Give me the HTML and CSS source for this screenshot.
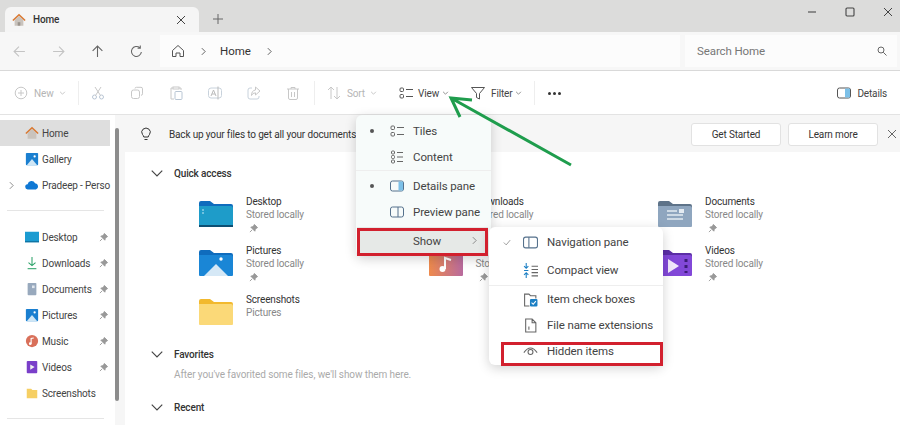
FILE: index.html
```html
<!DOCTYPE html>
<html>
<head>
    <meta charset="UTF-8">
    <title>Home - File Explorer</title>
    <link rel="stylesheet" href="styles.css">
</head>
<body>
<div class="window">
    <div class="tabbar">
        <div class="tab">
            <svg class="ic" viewBox="0 0 16 16"><path d="M3 8v6.500h10V8L8 3.500z" fill="#c9c3bd"/><path d="M6.500 14.500v-4h3v4z" fill="#9b948d"/><path d="M1 8.500 8 2l7 6.500" fill="none" stroke="#d9772f" stroke-width="1.700"/></svg>
            <span class="tab-title">Home</span>
            <svg class="ic-s tab-close" viewBox="0 0 10 10"><path d="M1 1l8 8M9 1l-8 8" stroke="#444" fill="none"/></svg>
        </div>
        <svg class="ic-s tab-plus" viewBox="0 0 10 10"><path d="M5 0v10M0 5h10" stroke="#666" fill="none"/></svg>
        <div class="win-buttons">
            <svg class="ic-s" viewBox="0 0 10 10"><path d="M1 5h8" stroke="#555" stroke-width="1.200"/></svg>
            <svg class="ic-s" viewBox="0 0 10 10"><rect x="1" y="1" width="8" height="8" rx="1" stroke="#444" stroke-width="1.100" fill="none"/></svg>
            <svg class="ic-s" viewBox="0 0 10 10"><path d="M1 1l8 8M9 1l-8 8" stroke="#444" fill="none"/></svg>
        </div>
    </div>

    <div class="addressbar">
        <div class="nav-buttons">
            <svg class="ic-nav" viewBox="0 0 12 12"><path d="M11 6H1M5.500 1.500 1 6l4.500 4.500" stroke="#c4c4c4" fill="none"/></svg>
            <svg class="ic-nav" viewBox="0 0 12 12"><path d="M1 6h10M6.500 1.500 11 6l-4.500 4.500" stroke="#c4c4c4" fill="none"/></svg>
            <svg class="ic-nav" viewBox="0 0 12 12"><path d="M6 11V1M1.500 5.500 6 1l4.500 4.500" stroke="#666" fill="none"/></svg>
            <svg class="ic-nav" viewBox="0 0 12 12"><path d="M10.500 6.500A4.600 4.600 0 1 1 9 2.500M9.500 .5v2.500H7" stroke="#666" fill="none"/></svg>
        </div>
        <div class="path-box">
            <svg class="ic-home" viewBox="0 0 14 14"><path d="M1.500 6.500 7 1.500l5.500 5v6H9V9H5v3.500H1.500z" stroke="#555" fill="none"/></svg>
            <svg class="chev-r" viewBox="0 0 6 10"><path d="M1 1l4 4-4 4" stroke="#444" fill="none"/></svg>
            <span class="path-text">Home</span>
            <svg class="chev-r" viewBox="0 0 6 10"><path d="M1 1l4 4-4 4" stroke="#444" fill="none"/></svg>
        </div>
        <div class="search-box">
            <span>Search Home</span>
            <svg class="ic-s" viewBox="0 0 10 10"><circle cx="4" cy="4" r="3" stroke="#666" fill="none"/><path d="M6.300 6.300 9.500 9.500" stroke="#666"/></svg>
        </div>
    </div>

    <div class="toolbar">
        <div class="tool tool-new">
            <svg class="ic" viewBox="0 0 14 14"><circle cx="7" cy="7" r="5.800" stroke="#c8c8c8" fill="none"/><path d="M7 4v6M4 7h6" stroke="#c8c8c8"/></svg>
            <span class="off">New</span>
            <svg class="chev-d" viewBox="0 0 8 5"><path d="M1 1l3 3 3-3" stroke="#bbb" fill="none"/></svg>
        </div>
        <div class="tool-sep"></div>
        <div class="tool-icons">
            <svg class="ic" viewBox="0 0 14 14"><circle cx="3.500" cy="11" r="2" stroke="#b9c6d4" fill="none"/><circle cx="10.500" cy="11" r="2" stroke="#b9c6d4" fill="none"/><path d="M4.500 9.500 10 1M9.500 9.500 4 1" stroke="#c8c8c8" fill="none"/></svg>
            <svg class="ic" viewBox="0 0 14 14"><rect x="1.500" y="4" width="8" height="8.500" rx="2" stroke="#c8c8c8" fill="#fff"/><path d="M5 2.500q0-1.200 1.500-1.200H11q1.500 0 1.500 1.500v5q0 1.500-1.500 1.500" stroke="#c8c8c8" fill="none"/></svg>
            <svg class="ic" viewBox="0 0 14 14"><path d="M4 2H2v11h3M10 2h2v2" stroke="#c8c8c8" fill="none"/><rect x="4" y="1" width="6" height="2" stroke="#c8c8c8" fill="none"/><rect x="6" y="5.500" width="7" height="8" rx="1" stroke="#b9c6d4" fill="none"/></svg>
            <svg class="ic" viewBox="0 0 14 14"><rect x=".5" y="2" width="13" height="10" rx="2.500" stroke="#c8d2dc" fill="none"/><path d="M3 10l2.500-6L8 10M4 8h3M10 .5v13" stroke="#bbb" fill="none"/></svg>
            <svg class="ic" viewBox="0 0 14 14"><path d="M5 2H3q-2 0-2 2v7q0 2 2 2h7q2 0 2-2v-1" stroke="#c8d2dc" fill="none"/><path d="M8.500 1 13 5 8.500 9V6.800Q5.500 6.800 4.500 9.500q0-5 4-5.500z" stroke="#c8c8c8" fill="none"/></svg>
            <svg class="ic" viewBox="0 0 14 14"><path d="M1 3h12M5 3V1.500h4V3M2.500 3v9q0 1.500 1.500 1.500h6q1.500 0 1.500-1.500V3M5.500 6v5M8.500 6v5" stroke="#c8c8c8" fill="none"/></svg>
        </div>
        <div class="tool-sep"></div>
        <div class="tool tool-sort">
            <svg class="ic" viewBox="0 0 14 14"><path d="M4 13V1M1 4l3-3 3 3M10 1v12M7 10l3 3 3-3" stroke="#c8c8c8" fill="none"/></svg>
            <span class="off">Sort</span>
            <svg class="chev-d" viewBox="0 0 8 5"><path d="M1 1l3 3 3-3" stroke="#bbb" fill="none"/></svg>
        </div>
        <div class="tool tool-view">
            <svg class="ic" viewBox="0 0 14 14"><rect x="1" y="2" width="3.500" height="3.500" rx="1" stroke="#555" fill="none"/><rect x="1" y="8.500" width="3.500" height="3.500" rx="1" stroke="#555" fill="none"/><path d="M7 3.500h7M7 10.500h7" stroke="#555"/></svg>
            <span>View</span>
            <svg class="chev-d" viewBox="0 0 8 5"><path d="M1 1l3 3 3-3" stroke="#777" fill="none"/></svg>
        </div>
        <div class="tool tool-filter">
            <svg class="ic" viewBox="0 0 14 14"><path d="M.5 1.500h13L8.500 7.500v5.500l-3-1.500v-4z" stroke="#555" fill="none"/></svg>
            <span>Filter</span>
            <svg class="chev-d" viewBox="0 0 8 5"><path d="M1 1l3 3 3-3" stroke="#777" fill="none"/></svg>
        </div>
        <div class="tool-sep"></div>
        <div class="more"><i></i><i></i><i></i></div>
        <div class="tool tool-details">
            <svg class="ic" viewBox="0 0 14 14"><rect x=".5" y="2" width="13" height="10" rx="2" stroke="#555" fill="none"/><rect x="8" y="2.500" width="5" height="9" fill="#7cc0e8"/></svg>
            <span>Details</span>
        </div>
    </div>

    <div class="main">
        <div class="sidebar">
            <div class="side-row current">
                <svg class="ic" viewBox="0 0 16 16"><path d="M3 8v6.500h10V8L8 3.500z" fill="#c9c3bd"/><path d="M1 8.500 8 2l7 6.500" fill="none" stroke="#d9772f" stroke-width="1.700"/></svg>
                <span>Home</span>
            </div>
            <div class="side-row">
                <svg class="ic" viewBox="0 0 16 16"><rect x="1" y="1" width="14" height="14" rx="1" fill="#1a7fd0"/><path d="M2 15l6-7 6 7z" fill="#cfe6f5"/><circle cx="11" cy="5" r="1.300" fill="#fff"/></svg>
                <span>Gallery</span>
            </div>
            <div class="side-row">
                <svg class="side-arrow" viewBox="0 0 6 10"><path d="M1 1l4 4-4 4" stroke="#777" fill="none"/></svg>
                <svg class="ic" viewBox="0 0 16 16"><path d="M3.500 13a3 3 0 0 1-.5-6 4.500 4.500 0 0 1 8.500-1 3.600 3.600 0 0 1 1 7z" fill="#0f78d4"/></svg>
                <span>Pradeep - Perso</span>
            </div>
            <div class="side-line"></div>
            <div class="side-row">
                <svg class="ic" viewBox="0 0 16 16"><rect x="0" y="2" width="16" height="12" fill="#1b9bd1"/><rect x="0" y="13" width="16" height="1" fill="#0b5f8a"/></svg>
                <span>Desktop</span>
                <svg class="pin" viewBox="0 0 10 10"><path d="M6 .5 9.500 4 8.500 4.500 7 6 6.500 8 2 3.500 4 3 5.500 1.500zM3.500 6.500 1 9" stroke="#999" fill="#999"/></svg>
            </div>
            <div class="side-row">
                <svg class="ic" viewBox="0 0 16 16"><path d="M8 1v10M4 7.500 8 11l4-3.500" stroke="#2ea36a" stroke-width="1.200" fill="none"/><path d="M3 14.500h10" stroke="#2ea36a" stroke-width="1.200"/></svg>
                <span>Downloads</span>
                <svg class="pin" viewBox="0 0 10 10"><path d="M6 .5 9.500 4 8.500 4.500 7 6 6.500 8 2 3.500 4 3 5.500 1.500zM3.500 6.500 1 9" stroke="#999" fill="#999"/></svg>
            </div>
            <div class="side-row">
                <svg class="ic" viewBox="0 0 16 16"><rect x="3" y="1" width="10" height="14" rx="1" fill="#98a9bd"/><rect x="8" y="4" width="3" height="3" fill="#dfe6ee"/></svg>
                <span>Documents</span>
                <svg class="pin" viewBox="0 0 10 10"><path d="M6 .5 9.500 4 8.500 4.500 7 6 6.500 8 2 3.500 4 3 5.500 1.500zM3.500 6.500 1 9" stroke="#999" fill="#999"/></svg>
            </div>
            <div class="side-row">
                <svg class="ic" viewBox="0 0 16 16"><rect x="1" y="1" width="14" height="14" rx="1" fill="#1a7fd0"/><path d="M2 15l6-7 6 7z" fill="#cfe6f5"/><circle cx="11" cy="5" r="1.300" fill="#fff"/></svg>
                <span>Pictures</span>
                <svg class="pin" viewBox="0 0 10 10"><path d="M6 .5 9.500 4 8.500 4.500 7 6 6.500 8 2 3.500 4 3 5.500 1.500zM3.500 6.500 1 9" stroke="#999" fill="#999"/></svg>
            </div>
            <div class="side-row">
                <svg class="ic" viewBox="0 0 16 16"><circle cx="8" cy="8" r="7" fill="#d9705a"/><path d="M7 11V5l3-.5" stroke="#fff" stroke-width="1.300" fill="none"/><circle cx="6" cy="11" r="1.500" fill="#fff"/></svg>
                <span>Music</span>
                <svg class="pin" viewBox="0 0 10 10"><path d="M6 .5 9.500 4 8.500 4.500 7 6 6.500 8 2 3.500 4 3 5.500 1.500zM3.500 6.500 1 9" stroke="#999" fill="#999"/></svg>
            </div>
            <div class="side-row">
                <svg class="ic" viewBox="0 0 16 16"><rect x="2" y="1" width="12" height="14" rx="1" fill="#7a3fc9"/><path d="M6 5l5 3-5 3z" fill="#eee"/></svg>
                <span>Videos</span>
                <svg class="pin" viewBox="0 0 10 10"><path d="M6 .5 9.500 4 8.500 4.500 7 6 6.500 8 2 3.500 4 3 5.500 1.500zM3.500 6.500 1 9" stroke="#999" fill="#999"/></svg>
            </div>
            <div class="side-row">
                <svg class="ic" viewBox="0 0 16 16"><path d="M2 3h5l1.500 1.500H14V14H2z" fill="#f6cf63"/></svg>
                <span>Screenshots</span>
            </div>
            <div class="side-line"></div>
        </div>
        <div class="scroll-track"><div class="scroll-thumb"></div></div>

        <div class="content">
            <div class="banner">
                <svg class="ic" viewBox="0 0 14 14"><path d="M4.800 10Q4.500 8.500 3.500 7.500 1.500 4.500 4 2.200 7-.2 10 2.200q2.500 2.300.5 5.300-1 1-1.300 2.500zM5.500 12.500h3" stroke="#333" fill="none"/></svg>
                <span class="banner-text">Back up your files to get all your documents</span>
                <button class="btn">Get Started</button>
                <button class="btn">Learn more</button>
                <svg class="ic-s banner-x" viewBox="0 0 10 10"><path d="M1 1l8 8M9 1l-8 8" stroke="#666" fill="none"/></svg>
            </div>

            <div class="section-head quick-head">
                <svg class="chev-big" viewBox="0 0 10 6"><path d="M.5.5 5 5 9.500.5" stroke="#444" fill="none"/></svg>
                <span>Quick access</span>
            </div>
            <div class="items">
                <div class="item">
                    <svg class="folder" viewBox="0 0 34 28"><path d="M0 3q0-2 2-2h9l4 3h17q2 0 2 2v2H0z" fill="#0f6cbd"/><path d="M0 6h32q2 0 2 2v18q0 1-1 1H1q-1 0-1-1z" fill="#1e9cc9"/><rect x="0" y="25" width="34" height="2" fill="#0d4f73"/><path d="M3 10h2M3 13h2" stroke="#bfe7f5"/></svg>
                    <div class="item-text"><b>Desktop</b><span>Stored locally</span>
                        <svg class="pin" viewBox="0 0 10 10"><path d="M6 .5 9.500 4 8.500 4.500 7 6 6.500 8 2 3.500 4 3 5.500 1.500zM3.500 6.500 1 9" stroke="#999" fill="#999"/></svg></div>
                </div>
                <div class="item item-under">
                    <div class="item-spacer"></div>
                    <div class="item-text"><b>Downloads</b><span>Stored locally</span></div>
                </div>
                <div class="item">
                    <svg class="folder" viewBox="0 0 34 28"><path d="M0 3q0-2 2-2h9l4 3h17q2 0 2 2v2H0z" fill="#5e7389"/><path d="M0 6h32q2 0 2 2v18q0 1-1 1H1q-1 0-1-1z" fill="#8fa6bf"/><path d="M9 11h10M9 15h16M9 19h16" stroke="#e4ebf2" stroke-width="1.500"/><rect x="21" y="9" width="5" height="4" fill="#e4ebf2"/></svg>
                    <div class="item-text"><b>Documents</b><span>Stored locally</span>
                        <svg class="pin" viewBox="0 0 10 10"><path d="M6 .5 9.500 4 8.500 4.500 7 6 6.500 8 2 3.500 4 3 5.500 1.500zM3.500 6.500 1 9" stroke="#999" fill="#999"/></svg></div>
                </div>
                <div class="item">
                    <svg class="folder" viewBox="0 0 34 28"><path d="M0 3q0-2 2-2h9l4 3h17q2 0 2 2v2H0z" fill="#0f6cbd"/><path d="M0 6h32q2 0 2 2v18q0 1-1 1H1q-1 0-1-1z" fill="#1a86d6"/><path d="M5 27l12-12 12 12z" fill="#d5e8f6"/><circle cx="22" cy="10" r="1.700" fill="#fff"/></svg>
                    <div class="item-text"><b>Pictures</b><span>Stored locally</span>
                        <svg class="pin" viewBox="0 0 10 10"><path d="M6 .5 9.500 4 8.500 4.500 7 6 6.500 8 2 3.500 4 3 5.500 1.500zM3.500 6.500 1 9" stroke="#999" fill="#999"/></svg></div>
                </div>
                <div class="item">
                    <svg class="folder" viewBox="0 0 34 28"><defs><linearGradient id="musicFill" x1="0" y1="0" x2="1" y2="0"><stop offset="0" stop-color="#ee8a4c"/><stop offset="1" stop-color="#b86a9e"/></linearGradient></defs><path d="M0 3q0-2 2-2h9l4 3h17q2 0 2 2v20q0 1-1 1H1q-1 0-1-1z" fill="url(#musicFill)"/><path d="M16 20V9l6 2" stroke="#fff" stroke-width="2" fill="none"/><circle cx="13.500" cy="20" r="3" fill="#fff"/></svg>
                    <div class="item-text"><b>Music</b><span>Stored locally</span>
                        <svg class="pin" viewBox="0 0 10 10"><path d="M6 .5 9.500 4 8.500 4.500 7 6 6.500 8 2 3.500 4 3 5.500 1.500zM3.500 6.500 1 9" stroke="#999" fill="#999"/></svg></div>
                </div>
                <div class="item">
                    <svg class="folder" viewBox="0 0 34 28"><path d="M0 3q0-2 2-2h9l4 3h17q2 0 2 2v2H0z" fill="#5b2ea6"/><path d="M0 6h32q2 0 2 2v18q0 1-1 1H1q-1 0-1-1z" fill="#8248d8"/><path d="M10 10l11 7-11 7z" fill="#f1e8fb"/><path d="M28 10v3M28 16v3M28 22v2" stroke="#3d1c78" stroke-width="3"/></svg>
                    <div class="item-text"><b>Videos</b><span>Stored locally</span>
                        <svg class="pin" viewBox="0 0 10 10"><path d="M6 .5 9.500 4 8.500 4.500 7 6 6.500 8 2 3.500 4 3 5.500 1.500zM3.500 6.500 1 9" stroke="#999" fill="#999"/></svg></div>
                </div>
                <div class="item">
                    <svg class="folder" viewBox="0 0 34 28"><path d="M0 3q0-2 2-2h9l4 3h17q2 0 2 2v2H0z" fill="#f2b92e"/><path d="M0 6h32q2 0 2 2v18q0 1-1 1H1q-1 0-1-1z" fill="#fbd978"/></svg>
                    <div class="item-text"><b>Screenshots</b><span>Pictures</span></div>
                </div>
            </div>

            <div class="section-head fav-head">
                <svg class="chev-big" viewBox="0 0 10 6"><path d="M.5.5 5 5 9.500.5" stroke="#444" fill="none"/></svg>
                <span>Favorites</span>
            </div>
            <p class="fav-note">After you've favorited some files, we'll show them here.</p>
            <div class="section-head recent-head">
                <svg class="chev-big" viewBox="0 0 10 6"><path d="M.5.5 5 5 9.500.5" stroke="#444" fill="none"/></svg>
                <span>Recent</span>
            </div>
        </div>
    </div>

    <!-- View dropdown -->
    <div class="menu menu-view">
        <div class="menu-row"><i class="dot"></i>
            <svg class="ic" viewBox="0 0 14 14"><rect x="1" y="2" width="3.500" height="3.500" rx="1" stroke="#666" fill="none"/><rect x="1" y="8.500" width="3.500" height="3.500" rx="1" stroke="#666" fill="none"/><path d="M7 3.500h7M7 10.500h7" stroke="#666"/></svg>
            <span>Tiles</span></div>
        <div class="menu-row"><i class="dot none"></i>
            <svg class="ic" viewBox="0 0 14 14"><rect x="1.500" y="1" width="3" height="3" rx="1" stroke="#666" fill="none"/><rect x="1.500" y="5.500" width="3" height="3" rx="1" stroke="#666" fill="none"/><rect x="1.500" y="10" width="3" height="3" rx="1" stroke="#666" fill="none"/><path d="M7 2.500h6M7 7h6M7 11.500h6" stroke="#666"/></svg>
            <span>Content</span></div>
        <div class="menu-line line-first"></div>
        <div class="menu-row"><i class="dot"></i>
            <svg class="ic" viewBox="0 0 14 14"><rect x=".5" y="2" width="13" height="10" rx="2" stroke="#55718c" fill="none"/><rect x="8.500" y="2.500" width="4.500" height="9" fill="#7cc0e8"/></svg>
            <span>Details pane</span></div>
        <div class="menu-row"><i class="dot none"></i>
            <svg class="ic" viewBox="0 0 14 14"><rect x=".5" y="2" width="13" height="10" rx="2" stroke="#55718c" fill="none"/><path d="M8 2v10" stroke="#55718c"/></svg>
            <span>Preview pane</span></div>
        <div class="row-show menu-row">
            <span class="show-label">Show</span>
            <svg class="chev-r" viewBox="0 0 6 10"><path d="M1 1l4 4-4 4" stroke="#777" fill="none"/></svg></div>
    </div>

    <!-- Show submenu -->
    <div class="menu menu-show">
        <div class="menu-row"><svg class="check" viewBox="0 0 10 8"><path d="M1 4l3 3 5-6" stroke="#888" fill="none"/></svg>
            <svg class="ic" viewBox="0 0 14 14"><rect x=".5" y="2" width="13" height="10" rx="2" stroke="#55718c" fill="none"/><path d="M5.500 2v10" stroke="#55718c"/></svg>
            <span>Navigation pane</span></div>
        <div class="menu-row row-compact"><i class="check-none"></i>
            <svg class="ic" viewBox="0 0 14 14"><path d="M3 0v5M1 3l2 2 2-2M3 14V9M1 11l2-2 2 2M1 7h4" stroke="#1b7fc4" fill="none"/><path d="M8 3h6M8 6h6M8 9h6M8 12h6" stroke="#666"/></svg>
            <span>Compact view</span></div>
        <div class="menu-line"></div>
        <div class="menu-row"><i class="check-none"></i>
            <svg class="ic" viewBox="0 0 14 14"><path d="M6 13H1.500V2h4l1.500 1.500h5V6" stroke="#666" fill="none"/><rect x="6.500" y="6.500" width="7" height="7" rx="1" fill="#1b7fc4"/><path d="M8 10l1.500 1.500L12 8.500" stroke="#fff" fill="none"/></svg>
            <span>Item check boxes</span></div>
        <div class="menu-row"><i class="check-none"></i>
            <svg class="ic" viewBox="0 0 14 14"><path d="M2.500 1h6l3.500 3.500V13h-9.500zM8.500 1v3.500H12M5.500 8v3" stroke="#666" fill="none"/></svg>
            <span>File name extensions</span></div>
        <div class="menu-row"><i class="check-none"></i>
            <svg class="ic" viewBox="0 0 14 14"><path d="M.8 8Q7-.5 13.200 8" stroke="#666" fill="none"/><circle cx="7" cy="7.500" r="2.300" stroke="#666" fill="none"/></svg>
            <span>Hidden items</span></div>
    </div>

    <div class="redbox redbox-show"></div>
    <div class="redbox redbox-hidden"></div>

    <svg class="arrow" viewBox="0 0 900 425"><path d="M571 165 451 98M472 100 451 98 460 117" stroke="#1f9d4d" stroke-width="3" fill="none"/></svg>
</div>
</body>
</html>
```

FILE: styles.css
```css
* {
    box-sizing: border-box;
}

html, body {
    margin: 0;
    height: 100%;
}

body {
    font-family: 'Roboto', 'Noto Sans', sans-serif;
    font-size: 10px;
    letter-spacing: -0.15px;
    color: #333;
    background-color: #fff;
    overflow: hidden;
}

.window {
    position: relative;
    width: 900px;
    height: 425px;
    overflow: hidden;
}

svg {
    flex: none;
    display: block;
}

.ic { width: 14px; height: 14px; }
.ic-s { width: 10px; height: 10px; }
.ic-nav { width: 13px; height: 13px; }
.ic-home { width: 14px; height: 14px; }
.chev-r { width: 5px; height: 9px; }
.chev-d { width: 7px; height: 4px; }
.chev-big { width: 12px; height: 7px; }
.pin { width: 9px; height: 9px; }
.off { color: #b5b5b5; }

/* title bar */
.tabbar {
    display: flex;
    align-items: flex-end;
    height: 32px;
    padding-left: 5px;
    background-color: #dcdcdb;
}

.tab {
    display: flex;
    align-items: center;
    width: 194px;
    height: 25px;
    padding: 0 13px 0 7px;
    background-color: #f5f5f5;
    border-radius: 6px 6px 0 0;
}

.tab-title {
    flex: 1;
    margin-left: 7px;
    font-weight: 500;
    color: #333;
}

.tab-plus {
    margin: 0 0 8px 14px;
}

.win-buttons {
    display: flex;
    gap: 28px;
    margin: 0 7px 15px auto;
}

/* address row */
.addressbar {
    display: flex;
    align-items: center;
    height: 39px;
    background-color: #f7f7f7;
    border-bottom: 1px solid #d9d9d9;
}

.nav-buttons {
    display: flex;
    gap: 26px;
    width: 160px;
    padding-left: 13px;
}

.path-box {
    display: flex;
    align-items: center;
    width: 520px;
    height: 32px;
    padding-left: 11px;
    background-color: #fcfcfc;
}

.chev-r { margin-left: 16px; }

.path-text {
    margin-left: 14px;
    font-size: 11.500px;
    letter-spacing: 0;
    color: #333;
}

.search-box {
    display: flex;
    align-items: center;
    justify-content: space-between;
    width: 212px;
    height: 32px;
    margin-left: 5px;
    padding: 0 10px 0 12px;
    background-color: #fcfcfc;
    color: #777;
    font-size: 11.500px;
    letter-spacing: -0.1px;
}

/* command bar */
.toolbar {
    display: flex;
    align-items: center;
    height: 44px;
    padding: 1px 0 0 14px;
    background-color: #fff;
    border-bottom: 1px solid #e3e3e3;
}

.tool {
    display: flex;
    align-items: center;
    color: #444;
}

.tool span { margin-left: 6px; }
.tool .chev-d { margin-left: 5px; }

.tool-new { width: 64px; }

.tool-sep {
    width: 1px;
    height: 24px;
    background-color: #eee;
}

.tool-icons {
    display: flex;
    gap: 25px;
    width: 235px;
    padding-left: 12px;
}

.tool-sort { width: 72px; margin-left: 12px; }
.tool-view { width: 72px; }
.tool-view span { margin-left: 5px; }
.tool-view .chev-d { margin-left: 3px; }
.tool-filter { width: 63px; }
.tool-filter .chev-d { margin-left: 3px; }

.more {
    display: flex;
    gap: 2px;
    margin-left: 13px;
}

.more i {
    width: 3px;
    height: 3px;
    border-radius: 50%;
    background-color: #333;
}

.tool-details { margin: 0 13px 0 auto; }

/* main area */
.main {
    display: flex;
    height: 310px;
}

.sidebar {
    width: 115px;
    padding-top: 5px;
    flex: none;
}

.side-row {
    position: relative;
    display: flex;
    align-items: center;
    height: 26px;
    width: 110px;
    padding-left: 25px;
    color: #444;
    white-space: nowrap;
}

.side-row span {
    margin-left: 3px;
}

.side-row.current {
    background-color: #dedede;
}

.side-arrow {
    position: absolute;
    left: 9px;
    width: 5px;
    height: 9px;
    margin: 0;
}

.side-row .pin {
    margin-left: auto;
    margin-right: 2px;
}

.side-line {
    width: 97px;
    height: 1px;
    margin: 12px 0 13px 7px;
    background-color: #e5e5e5;
}

.scroll-track {
    flex: none;
    width: 10px;
    padding: 13px 0 0 0;
    background-color: #f6f6f6;
}

.scroll-thumb {
    width: 4px;
    height: 273px;
    border-radius: 2px;
    background-color: #8c8c8c;
}

.content {
    flex: 1;
    min-width: 0;
}

.banner {
    display: flex;
    align-items: center;
    height: 37px;
    padding: 1px 3px 0 14px;
    background-color: #f6f6f6;
}

.banner-text {
    flex: 1;
    margin-left: 16px;
    color: #333;
}

.btn {
    width: 90px;
    height: 23px;
    margin-right: 7px;
    padding: 0;
    font-family: inherit;
    font-size: 10px;
    letter-spacing: inherit;
    color: #333;
    background-color: #fff;
    border: 1px solid #e2e2e2;
    border-radius: 3px;
}

.banner-x {
    margin: 0 0 0 2px;
}

.section-head {
    display: flex;
    align-items: center;
    height: 16px;
    padding-left: 26px;
    font-weight: 500;
    color: #333;
}

.section-head span {
    margin-left: 11px;
}

.quick-head { margin-top: 13px; }
.fav-head { margin-top: 5px; }
.recent-head { margin-top: 17px; }

.items {
    display: grid;
    grid-template-columns: repeat(3, 229.5px);
    grid-auto-rows: 49px;
    margin-top: 13px;
    padding-left: 74px;
}

.item {
    display: flex;
    gap: 13px;
}

.folder {
    width: 34px;
    height: 28px;
    margin-top: 6px;
}

.item-spacer {
    width: 34px;
}

.item-text {
    display: flex;
    flex-direction: column;
    padding-top: 1px;
    line-height: 13px;
}

.item-text b {
    font-weight: 400;
    color: #333;
}

.item-text span {
    color: #888;
}

.item-text .pin {
    margin: 3px 0 0 3px;
}

.fav-note {
    margin: 6px 0 0 49px;
    color: #aaa;
    letter-spacing: -0.1px;
    line-height: 14px;
}

/* dropdown menus */
.menu {
    position: absolute;
    background-color: #f7fbfa;
    border-radius: 6px;
    box-shadow: 0 3px 12px rgba(0, 0, 0, 0.18);
    font-size: 11.500px;
    letter-spacing: -0.1px;
    color: #444;
}

.menu-view {
    left: 356px;
    top: 115px;
    width: 135px;
    height: 141px;
    padding-top: 3px;
}

.menu-show {
    left: 489px;
    top: 227px;
    width: 174px;
    height: 138px;
    padding-top: 2px;
    background-color: #fff;
}

.menu-row {
    display: flex;
    align-items: center;
    height: 26px;
    white-space: nowrap;
}

.menu-row span {
    margin-left: 9px;
}

.menu-line {
    height: 1px;
    background-color: #eee;
}

.line-first {
    margin-bottom: 2px;
}

.dot {
    flex: none;
    width: 4px;
    height: 4px;
    margin: 0 16px 0 14px;
    border-radius: 50%;
    background-color: #555;
}

.dot.none {
    background-color: transparent;
}

.check {
    width: 8px;
    height: 7px;
    margin: 0 12px 0 14px;
}

.check-none {
    flex: none;
    width: 8px;
    margin: 0 12px 0 14px;
}

.menu-show .ic {
    width: 15px;
    height: 15px;
}

.row-compact {
    height: 30px;
}

.row-show {
    width: 131px;
    height: 27px;
    margin: 2px 0 0 1px;
    background-color: #e6e9e7;
}

.show-label {
    margin-left: 56px !important;
}

.row-show .chev-r {
    margin-left: auto;
    margin-right: 11px;
}

.redbox {
    position: absolute;
    border: 3px solid #d2202e;
}

.redbox-show {
    left: 357px;
    top: 228px;
    width: 131px;
    height: 28px;
}

.redbox-hidden {
    left: 501px;
    top: 342px;
    width: 162px;
    height: 24px;
}

.arrow {
    position: absolute;
    left: 0;
    top: 0;
    width: 900px;
    height: 425px;
    pointer-events: none;
}
```
